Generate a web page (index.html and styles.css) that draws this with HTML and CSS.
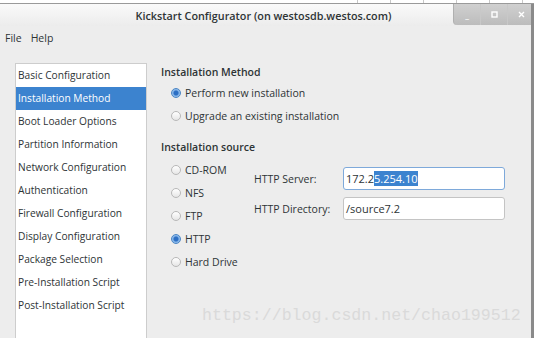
FILE: index.html
```html
<!DOCTYPE html>
<html>
<head>
<meta charset="utf-8">
<link rel="stylesheet" href="styles.css">
</head>
<body>
<div class="behind">
  <span class="cell c0"></span><span class="cell"></span><span class="cell"></span><span class="cell"></span><span class="cell"></span><span class="cell"></span>
</div>
<div class="window">
  <div class="titlebar">
    <div class="title">Kickstart Configurator (on westosdb.westos.com)</div>
    <div class="wbtns">
      <span class="wb">_</span>
      <span class="wb"><svg width="7" height="7" viewBox="0 0 7 7"><rect x="1" y="1" width="5" height="5" fill="none" stroke="#fff" stroke-width="1.4"/></svg></span>
      <span class="wb"><svg width="7" height="7" viewBox="0 0 7 7"><path d="M1 1L6 6M6 1L1 6" stroke="#fff" stroke-width="1.4"/></svg></span>
    </div>
  </div>
  <div class="menubar"><span>File</span><span>Help</span></div>
  <div class="content">
    <ul class="sidebar">
      <li>Basic Configuration</li>
      <li class="sel">Installation Method</li>
      <li>Boot Loader Options</li>
      <li>Partition Information</li>
      <li>Network Configuration</li>
      <li>Authentication</li>
      <li>Firewall Configuration</li>
      <li>Display Configuration</li>
      <li>Package Selection</li>
      <li>Pre-Installation Script</li>
      <li>Post-Installation Script</li>
    </ul>
    <div class="main">
      <div class="heading">Installation Method</div>
      <div class="radios">
        <div class="radio on"><span class="dot"></span>Perform new installation</div>
        <div class="radio"><span class="dot"></span>Upgrade an existing installation</div>
      </div>
      <div class="heading h2">Installation source</div>
      <div class="source">
        <div class="radios">
          <div class="radio"><span class="dot"></span>CD-ROM</div>
          <div class="radio"><span class="dot"></span>NFS</div>
          <div class="radio"><span class="dot"></span>FTP</div>
          <div class="radio on"><span class="dot"></span>HTTP</div>
          <div class="radio"><span class="dot"></span>Hard Drive</div>
        </div>
        <div class="fields">
          <div class="field"><label>HTTP Server:</label><div class="input focus">172.2<span class="hl">5.254.10</span></div></div>
          <div class="field"><label>HTTP Directory:</label><div class="input">/source7.2</div></div>
        </div>
      </div>
    </div>
  </div>
  <div class="watermark">https://blog.csdn.net/chao199512</div>
</div>
</body>
</html>
```
FILE: styles.css
```css
html, body { margin: 0; padding: 0; }
body {
  width: 534px; height: 338px; overflow: hidden;
  background: #ededed;
  font-family: "Open Sans", "DejaVu Sans", sans-serif;
  font-size: 10.2px; color: #2e3436;
}
.behind { height: 4px; background: #fff; display: flex; border-bottom: 1px solid #9a9a9a; box-sizing: border-box; }
.behind .cell { width: 32px; border-right: 1px solid #c8c8c8; }
.behind .c0 { width: 357px; }
.window { position: relative; height: 334px; overflow: hidden; border-right: 3px solid #8a8a8a; box-sizing: border-box; }
.titlebar {
  height: 22px; display: flex; align-items: center; justify-content: center; position: relative;
  background: linear-gradient(#fafafa, #ececec);
}
.title { font-weight: 600; font-size: 10.8px; color: #2e3436; margin-top: 1px; margin-left: -4px; }
.wbtns {
  position: absolute; right: -3px; top: 0; height: 21px; display: flex;
  background: linear-gradient(#d0d0d0, #bcbcbc); border-bottom-left-radius: 4px;
  border-left: 1px solid #b0b0b0;
}
.wb { width: 26px; display: flex; align-items: center; justify-content: center; color: #fff; font-weight: bold; font-size: 9px; border-right: 1px solid #c8c8c8; }
.wb:last-child { border-right: none; }
.menubar { height: 24px; display: flex; align-items: center; gap: 9px; padding-left: 5px; font-size: 10.5px; }
.content { display: flex; padding: 13px 0 0 15px; gap: 14px; }
.sidebar {
  list-style: none; margin: 0; padding: 0; width: 130px; height: 300px;
  background: #fff; border: 1px solid #cdcdcd;
}
.sidebar li { height: 23px; line-height: 23px; padding-left: 2px; white-space: nowrap; }
.sidebar li.sel { background: #3c83cf; color: #fff; }
.main { flex: 1; padding-top: 2px; font-size: 10.5px; }
.heading { font-weight: 600; font-size: 10.5px; height: 14px; line-height: 14px; }
.h2 { margin-top: 13px; }
.radios { padding-left: 10px; margin-top: 2px; }
.source .radios { margin-top: 4px; }
.radio { height: 23px; display: flex; align-items: center; gap: 4px; white-space: nowrap; }
.dot {
  width: 8px; height: 8px; border-radius: 50%; border: 1px solid #b8b8b8;
  background: linear-gradient(#fff, #e6e6e6);
}
.radio.on .dot {
  border-color: #4a85c4;
  background: radial-gradient(circle, #2c6fc4 0 2px, #7fb0e6 3px, #a9cdf2 5px);
}
.source { display: flex; }
.source .radios { width: 72px; }
.fields { padding-top: 13px; padding-left: 11px; }
.field { display: flex; align-items: center; height: 23px; margin-bottom: 7px; }
.field label { width: 89px; }
.input {
  width: 162px; height: 23px; box-sizing: border-box; line-height: 21px;
  background: #fff; border: 1px solid #c4c4c4; border-radius: 3px; padding-left: 2px;
  font-size: 11px;
}
.input.focus { border-color: #7ea9da; }
.hl { background: #3c83cf; color: #fff; }
.watermark {
  position: absolute; left: 202px; top: 302px;
  font-family: "Liberation Mono", "DejaVu Sans Mono", monospace; font-size: 16.6px;
  color: #dadada;
}
```
